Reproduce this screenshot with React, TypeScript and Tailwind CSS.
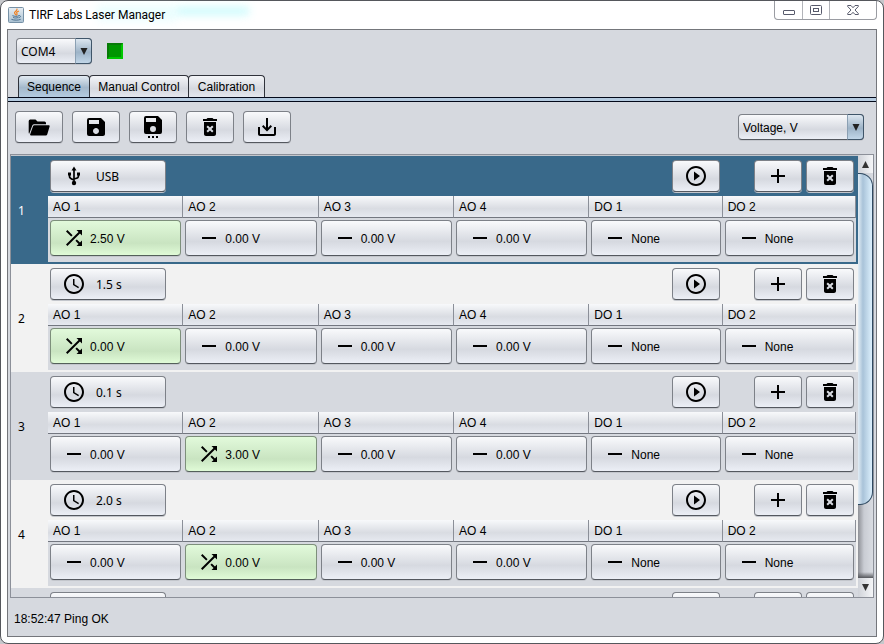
import type { ReactNode } from "react";
import {
  MdAccessTime,
  MdAdd,
  MdDeleteForever,
  MdPlayCircleOutline,
  MdRemove,
  MdSave,
  MdSaveAlt,
  MdShuffle,
} from "react-icons/md";

const face =
  "rounded border border-[#7d8188] border-b-[#54585f] bg-linear-to-b from-[#f9fafc] via-[#d6d9e0] via-60% to-[#eceff6] shadow-[0_1px_0_#c3c6cc]";
const greenFace =
  "rounded border border-[#7d8f7b] border-b-[#54605a] bg-linear-to-b from-[#e2fadb] via-[#c9e4c1] via-65% to-[#e0fbd7] shadow-[0_1px_0_#c3c6cc]";

const headings = ["AO 1", "AO 2", "AO 3", "AO 4", "DO 1", "DO 2"];

type Step = { trigger: string; usb?: boolean; active: number; values: string[] };

const steps: Step[] = [
  { trigger: "USB", usb: true, active: 0, values: ["2.50 V", "0.00 V", "0.00 V", "0.00 V", "None", "None"] },
  { trigger: "1.5 s", active: 0, values: ["0.00 V", "0.00 V", "0.00 V", "0.00 V", "None", "None"] },
  { trigger: "0.1 s", active: 1, values: ["0.00 V", "3.00 V", "0.00 V", "0.00 V", "None", "None"] },
  { trigger: "2.0 s", active: 1, values: ["0.00 V", "0.00 V", "0.00 V", "0.00 V", "None", "None"] },
];

function IconButton({ label, children }: { label: string; children?: ReactNode }) {
  return (
    <button type="button" aria-label={label} className={`flex h-8 w-12 shrink-0 items-center justify-center ${face}`}>
      {children}
    </button>
  );
}

function Combo({ label, options, className }: { label: string; options: string[]; className: string }) {
  return (
    <div className={`relative h-[26px] ${className}`}>
      <select aria-label={label} className={`h-full w-full appearance-none pt-px pl-1 outline-none ${face}`}>
        {options.map((o) => (
          <option key={o}>{o}</option>
        ))}
      </select>
      <span className="pointer-events-none absolute inset-y-0 right-0 flex w-[17px] items-center justify-center rounded-r border border-[#3f5569] border-l-[#8ba0b3] bg-linear-to-b from-[#dde7f0] via-[#9db3c7] via-55% to-[#c1d6e8]">
        <svg viewBox="0 0 8 7" className="h-[7px] w-2" aria-hidden="true">
          <path d="M0.5 0h7L4 7z" fill="#222" />
        </svg>
      </span>
    </div>
  );
}

function FolderIcon() {
  return (
    <svg viewBox="0 0 22 17" className="h-[17px] w-[22px]" aria-hidden="true">
      <path d="M2.200 0.500H7.500L9.500 2.500H16.500a1.500 1.500 0 0 1 1.500 1.500V5.200H6.200a2 2 0 0 0-1.900 1.300L1.200 14.800A1.500 1.500 0 0 1 0.700 13.600V2A1.500 1.500 0 0 1 2.200.500z" />
      <path d="M6.400 6.200H20.600a1 1 0 0 1 1 1.300L19.300 15.200A1.700 1.700 0 0 1 17.700 16.500H3.200a1 1 0 0 1-1-1.300L5 7.200A1.500 1.500 0 0 1 6.400 6.200z" />
    </svg>
  );
}

function UsbIcon() {
  return (
    <svg viewBox="0 0 24 24" className="h-6 w-6" fill="none" stroke="#000" strokeWidth="1.700" aria-hidden="true">
      <path d="M12 5v14M7.500 10v2.500c0 2 1.200 2.300 4.500 3.500M16.500 10v1.500c0 2.500-1.200 2.600-4.500 3.500" />
      <path d="M12 2.500L14.500 6.500h-5zM6 8.500h3v3H6zM15 8.500h3v3h-3z" fill="#000" stroke="none" />
      <circle cx="12" cy="19" r="2.200" fill="#000" stroke="none" />
    </svg>
  );
}

function SaveAsIcon() {
  return (
    <svg viewBox="0 0 24 28" className="h-7 w-6" aria-hidden="true">
      <path d="M17 3H5a2 2 0 0 0-2 2v14a2 2 0 0 0 2 2h14a2 2 0 0 0 2-2V7l-4-4zm-5 16a3 3 0 1 1 0-6 3 3 0 0 1 0 6zm3-10H5V5h10v4z" />
      <path d="M7 23h2v2H7zM11 23h2v2h-2zM15 23h2v2h-2z" />
    </svg>
  );
}

function JavaIcon() {
  return (
    <svg viewBox="0 0 16 16" className="h-4 w-4" aria-hidden="true">
      <defs>
        <linearGradient id="cup" x1="0" y1="0" x2="0" y2="1">
          <stop offset="0" stopColor="#e8eef3" />
          <stop offset="1" stopColor="#a9c0d1" />
        </linearGradient>
      </defs>
      <rect x="0.5" y="0.5" width="15" height="15" rx="1" fill="url(#cup)" stroke="#7691a6" />
      <g fill="none" strokeLinecap="round">
        <path d="M9 2c.6 2-3.600 2.500-2.300 4.400.3.500.8.900 1 1.300M10.500 4.200C9 4.800 8 5.500 9 6.600c.4.600 0 1-.5 1.400" stroke="#f08020" strokeWidth="1.200" />
        <path d="M4.800 8.800c1.700.8 4.600.7 6 0M5.500 10.600c1.300.6 3.300.6 4.500 0M3.800 12.500c2.500.9 6.500.9 8.500 0M11.200 8.600c2-.3 1.800 1.800-.2 2.200" stroke="#4c7190" strokeWidth="1" />
      </g>
    </svg>
  );
}

function TitleBar() {
  return (
    <header className="relative flex h-7 shrink-0 items-start justify-between pl-[7px]">
      <span className="absolute top-1 left-24 h-4 w-20 bg-[#d8fdfe] opacity-50 blur-[4px]" />
      <span className="absolute top-1.5 left-44 h-2 w-[72px] bg-[#a8f8fb] opacity-60 blur-[4px]" />
      <div className="relative flex h-7 items-center gap-[5px] font-[Roboto,'Noto_Sans',sans-serif] text-xs">
        <JavaIcon />
        <h1>TIRF Labs Laser Manager</h1>
      </div>
      <div className="mr-1.5 flex h-[19px] rounded-b border border-t-0 border-[#9a9ca2]">
        <button type="button" aria-label="Minimize" className="flex w-7 items-center justify-center border-r border-[#b2b4b9] pt-1">
          <svg viewBox="0 0 12 5" className="h-[5px] w-3" aria-hidden="true">
            <rect x="0.5" y="0.5" width="11" height="4" rx="0.500" fill="#fff" stroke="#575a6b" />
          </svg>
        </button>
        <button type="button" aria-label="Maximize" className="flex w-[27px] items-center justify-center border-r border-[#b2b4b9]">
          <svg viewBox="0 0 12 10" className="h-2.5 w-3" aria-hidden="true">
            <rect x="0.5" y="0.5" width="11" height="9" rx="1" fill="#fff" stroke="#575a6b" />
            <rect x="3.500" y="3.500" width="5" height="3" fill="#fff" stroke="#575a6b" />
          </svg>
        </button>
        <button type="button" aria-label="Close" className="flex w-[46px] items-center justify-center">
          <svg viewBox="0 0 12 10" className="h-2.5 w-3" aria-hidden="true">
            <path d="M.7.500H4l2 2.200L8 .500h3.300v1L8 5l3.300 3.500v1H8L6 7.300 4 9.500H.7v-1L4 5 .7 1.500z" fill="#fff" stroke="#575a6b" />
          </svg>
        </button>
      </div>
    </header>
  );
}

function Tabs() {
  const tab = "h-[22px] rounded-t border border-b-0 border-[#30333b] text-center";
  return (
    <nav role="tablist" className="mt-[11px] flex h-[27px] shrink-0 flex-col">
      <div className="flex pl-2.5">
        <button type="button" role="tab" aria-selected="true" className={`w-[72px] border-[#1c2a3c] bg-linear-to-b from-[#e3ebf2] via-[#a3b8cb] via-55% to-[#b4cbe0] ${tab}`}>
          Sequence
        </button>
        <button type="button" role="tab" aria-selected="false" className={`-ml-px w-[100px] bg-linear-to-b from-[#f4f5f8] via-[#d5d8df] via-60% to-[#e4e7ee] ${tab}`}>
          Manual Control
        </button>
        <button type="button" role="tab" aria-selected="false" className={`-ml-px w-[77px] bg-linear-to-b from-[#f4f5f8] via-[#d5d8df] via-60% to-[#e4e7ee] ${tab}`}>
          Calibration
        </button>
      </div>
      <div className="h-[5px] border-y border-[#03091a] bg-[#b5cbe0]" />
    </nav>
  );
}

function StepRow({ step, index }: { step: Step; index: number }) {
  const tone = index === 0 ? "bg-[#39698a] text-white" : index % 2 ? "bg-[#f2f2f2]" : "bg-[#d6d9df]";
  return (
    <li className={`flex h-[108px] shrink-0 items-stretch pr-0.5 ${tone}`}>
      <span className="flex w-[37px] shrink-0 items-center pt-0.5 pl-[7px] font-['Noto_Sans',sans-serif] text-xs">{index + 1}</span>
      <div className="flex min-w-0 flex-1 flex-col pb-0.5 text-black">
        <div className="flex h-10 items-center gap-1 px-0.5">
          <button type="button" className={`flex h-8 w-[116px] items-center gap-2.5 pl-[11px] font-['Noto_Sans',sans-serif] ${face}`}>
            {step.usb ? <UsbIcon /> : <MdAccessTime size={24} />}
            <span className="pt-0.5">{step.trigger}</span>
          </button>
          <div className="flex-1" />
          <IconButton label="Run step"><MdPlayCircleOutline size={24} /></IconButton>
          <div className="w-[26px]" />
          <IconButton label="Add step"><MdAdd size={24} /></IconButton>
          <IconButton label="Delete step"><MdDeleteForever size={24} /></IconButton>
        </div>
        <table className="w-full flex-1 table-fixed border-separate border-spacing-0 bg-[#d6d9df]">
          <thead>
            <tr>
              {headings.map((h, i) => (
                <th key={h} scope="col" className={`h-[22px] border-r border-b border-r-[#8b8f98] border-b-[#737780] bg-linear-to-b from-[#f8f9fb] via-[#d9dce2] via-60% to-[#e6e9f0] p-0 pl-[5px] text-left font-normal ${i < 4 ? "w-[16.75%]" : ""}`}>
                  {h}
                </th>
              ))}
            </tr>
          </thead>
          <tbody>
            <tr>
              {step.values.map((v, i) => (
                <td key={headings[i]} className="h-11 px-0.5 pt-0.5 pb-1.5 align-top">
                  <button type="button" className={`flex h-9 w-full items-center gap-1 pl-[11px] ${i === step.active ? greenFace : face}`}>
                    {i === step.active ? <MdShuffle size={24} /> : <MdRemove size={24} />}
                    <span className="pt-0.5">{v}</span>
                  </button>
                </td>
              ))}
            </tr>
          </tbody>
        </table>
      </div>
    </li>
  );
}

function UnloadedRow() {
  return (
    <li className="flex h-10 shrink-0 items-center gap-1 bg-[#d6d9df] pr-1 pl-[39px]">
      <button type="button" aria-label="Trigger" className={`h-8 w-[116px] ${face}`} />
      <div className="flex-1" />
      <IconButton label="Run step" />
      <div className="w-[26px]" />
      <IconButton label="Add step" />
      <IconButton label="Delete step" />
    </li>
  );
}

function ScrollBar() {
  return (
    <div className="flex w-[15px] shrink-0 flex-col bg-linear-to-r from-[#8f9197] via-[#c9ccd3] via-40% to-[#d9dce2]">
      <button type="button" aria-label="Scroll up" className="flex h-[18px] shrink-0 items-center justify-center bg-linear-to-r from-[#d0d3d9] to-[#f5f6f8]">
        <svg viewBox="0 0 7 7" className="h-[7px] w-[7px]" aria-hidden="true"><path d="M0 7h7L3.500 0z" fill="#333" /></svg>
      </button>
      <div className="flex-[332] rounded-r-[13px] border border-l-0 border-[#2f4a62] bg-linear-to-r from-[#e2edf5] via-[#a9c3d9] via-35% to-[#dcf0fd]" />
      <div className="flex flex-[73] flex-col justify-end">
        <div className="h-1.5 bg-linear-to-b from-transparent to-[#55575c]" />
      </div>
      <button type="button" aria-label="Scroll down" className="flex h-[19px] shrink-0 items-center justify-center bg-linear-to-r from-[#d0d3d9] to-[#f5f6f8]">
        <svg viewBox="0 0 7 7" className="h-[7px] w-[7px]" aria-hidden="true"><path d="M0 0h7L3.500 7z" fill="#333" /></svg>
      </button>
    </div>
  );
}

export default function App() {
  return (
    <div className="h-screen bg-[#c6c8cc] font-['Liberation_Sans',Arial,sans-serif] text-xs text-black">
      <div className="flex h-full flex-col rounded-lg border border-[#55575c] bg-white">
        <TitleBar />
        <main className="mx-1.5 mb-1.5 flex min-h-0 flex-1 flex-col border border-[#74767b] bg-[#d6d9df]">
          <div className="mt-2 flex h-[26px] shrink-0 items-center gap-[15px] pl-2 font-['Noto_Sans',sans-serif]">
            <Combo label="Port" options={["COM4"]} className="w-[76px]" />
            <span role="img" aria-label="Connected" className="h-4 w-4 border-2 border-[#00c800] border-t-[#087a08] border-l-[#087a08] bg-[#009600]" />
          </div>
          <Tabs />
          <div className="mt-[9px] flex h-8 shrink-0 items-center gap-[9px] pr-3 pl-[7px]">
            <IconButton label="Open"><FolderIcon /></IconButton>
            <IconButton label="Save"><MdSave size={24} /></IconButton>
            <IconButton label="Save as"><SaveAsIcon /></IconButton>
            <IconButton label="Delete all"><MdDeleteForever size={24} /></IconButton>
            <IconButton label="Download"><MdSaveAlt size={24} /></IconButton>
            <div className="flex-1" />
            <Combo label="Units" options={["Voltage, V"]} className="w-[126px]" />
          </div>
          <section className="mx-0.5 mt-[11px] flex min-h-0 flex-1 border border-[#8c9099]">
            <ol className="flex min-w-0 flex-1 flex-col overflow-hidden border-t border-[#c3c6cc]">
              {steps.map((step, i) => (
                <StepRow key={i} step={step} index={i} />
              ))}
              <UnloadedRow />
            </ol>
            <ScrollBar />
          </section>
          <footer className="flex h-[38px] shrink-0 items-center pt-1 pl-1.5">18:52:47 Ping OK</footer>
        </main>
      </div>
    </div>
  );
}
